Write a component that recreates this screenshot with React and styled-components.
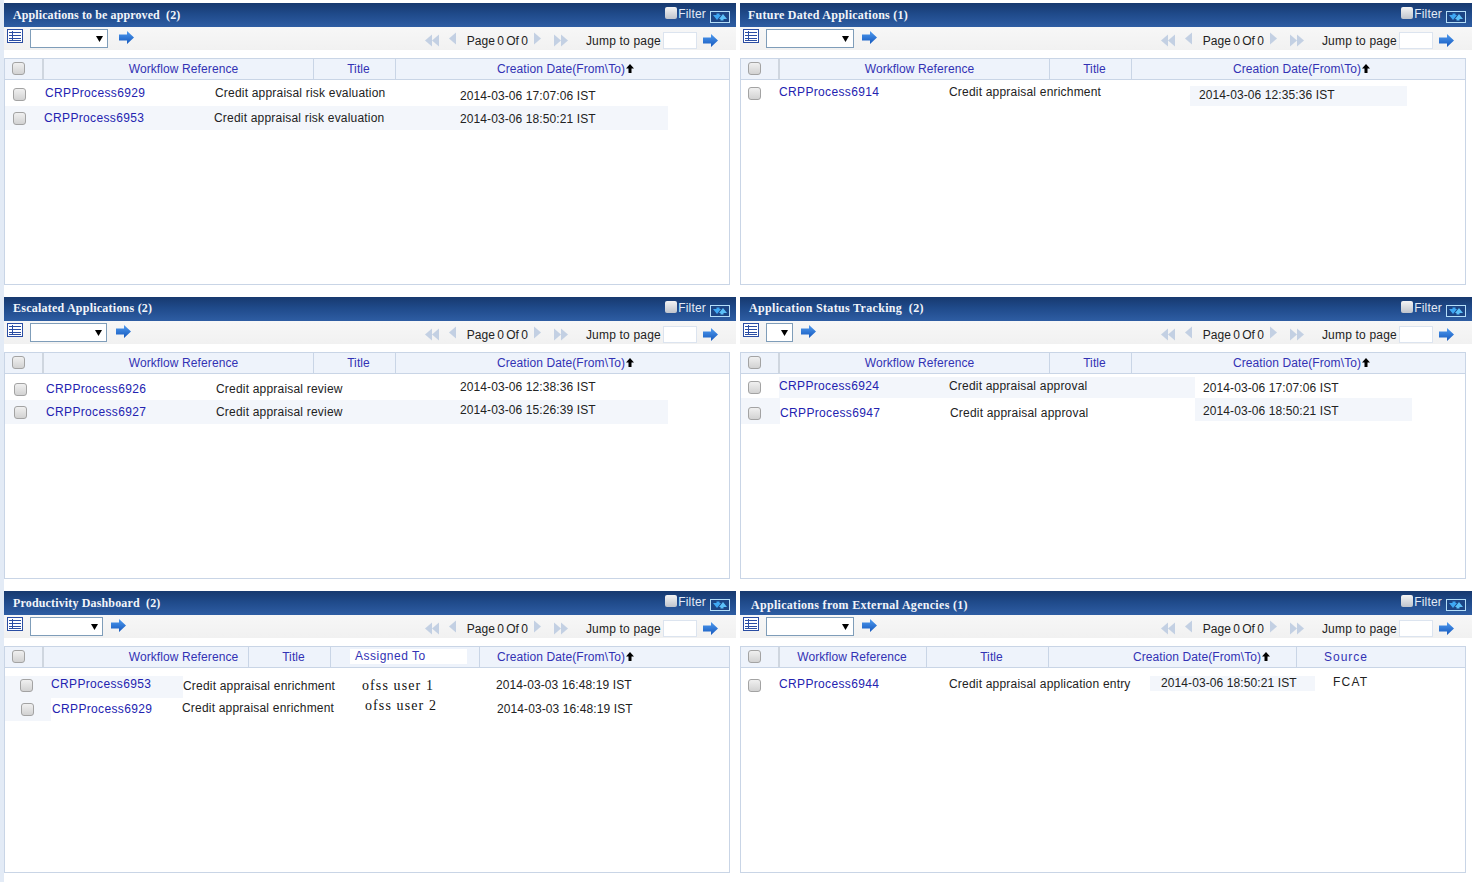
import React from 'react';
import styled, { createGlobalStyle } from 'styled-components';

const GlobalStyle = createGlobalStyle`
    html, body {
        margin: 0;
        padding: 0;
        background: #ffffff;
    }
    body {
        font-family: "Liberation Sans", Arial, sans-serif;
        font-size: 12px;
        color: #222222;
    }
`;

const Page = styled.div`
    display: grid;
    grid-template-columns: 732px 732px;
    grid-auto-rows: 282px;
    column-gap: 4px;
    row-gap: 12px;
    padding: 3px 0 9px 0;
    border-left: 4px solid #e3ebf6;
    width: 1469px;
    height: 870px;
`;

const Panel = styled.section`
    display: flex;
    flex-direction: column;
    min-width: 0;
`;

const PanelHeader = styled.header`
    display: flex;
    align-items: flex-start;
    height: 24px;
    box-sizing: border-box;
    padding-left: ${p => p.$titleX}px;
    background: linear-gradient(#17396f 0%, #1f4a8a 45%, #2e5da3 100%);
`;

const PanelTitle = styled.h2`
    margin: 0;
    padding-top: ${p => p.$drop + 5}px;
    font-family: "Liberation Serif", "Times New Roman", serif;
    font-size: 12px;
    line-height: 14px;
    font-weight: bold;
    letter-spacing: ${p => p.$spacing}px;
    color: #f2f5fa;
    white-space: pre;
`;

const FilterGroup = styled.label`
    display: flex;
    align-items: flex-start;
    margin-left: auto;
    padding: 4px 6px 0 0;
    color: #e3ebf6;
    line-height: 14px;
    letter-spacing: 0.2px;
`;

const FilterCheck = styled.input`
    appearance: none;
    width: 12px;
    height: 12px;
    margin: 0 1px 0 0;
    border-radius: 2px;
    background: linear-gradient(#f4f4f4, #bfc4cc);
`;

const RefreshGlyph = styled.svg`
    flex: none;
    width: 20px;
    height: 12px;
    margin: 4px 0 0 4px;
`;

const Toolbar = styled.div`
    display: flex;
    align-items: flex-start;
    height: 23px;
    padding-left: 3px;
    background: linear-gradient(#f7f7f7, #f1f1f1);
`;

const ListButton = styled.svg`
    flex: none;
    width: 16px;
    height: 14px;
    margin-top: 2px;
`;

const PageSelect = styled.div`
    flex: none;
    display: flex;
    align-items: center;
    justify-content: flex-end;
    box-sizing: border-box;
    width: ${p => p.$width}px;
    height: 19px;
    margin: 2px 0 0 7px;
    padding-right: 4px;
    border: 1px solid #7f9db9;
    background: #ffffff;
`;

const GoArrow = styled.svg`
    flex: none;
    width: 15px;
    height: 13px;
    margin-top: ${p => p.$top}px;
    margin-left: ${p => p.$left}px;
`;

const Pager = styled.div`
    display: flex;
    align-items: flex-start;
    margin-left: auto;
    padding-right: 18px;
`;

const PagerIcon = styled.svg`
    flex: none;
    height: 13px;
    margin-top: ${p => p.$top}px;
    margin-left: ${p => p.$left}px;
`;

const PageLabel = styled.span`
    margin: 7px 0 0 ${p => p.$left}px;
    line-height: 14px;
    letter-spacing: ${p => p.$spacing}px;
    word-spacing: ${p => p.$words}px;
    white-space: pre;
    color: #222222;
`;

const JumpInput = styled.input`
    flex: none;
    box-sizing: border-box;
    width: 34px;
    height: 17px;
    margin: 5px 0 0 2px;
    border: 1px solid #dce4ef;
    background: #ffffff;
`;

const Grid = styled.div`
    flex: 1;
    display: flex;
    flex-direction: column;
    width: 726px;
    margin-top: 8px;
    box-sizing: border-box;
    border: 1px solid #c9d5e6;
    min-height: 0;
`;

const GridHead = styled.div`
    display: grid;
    grid-template-columns: ${p => p.$cols};
    height: 21px;
    box-sizing: border-box;
    flex: none;
    border-bottom: 1px solid #c9d5e6;
    background: #eef3fb;
`;

const HeadCheck = styled.div`
    padding: 3px 0 0 7px;
    border-right: 2px solid #cfd6df;
`;

const HeadCell = styled.div`
    display: flex;
    align-items: center;
    justify-content: ${p => (p.$start ? 'flex-start' : 'center')};
    box-sizing: border-box;
    padding: 0 ${p => p.$right || 0}px 1px ${p => p.$left || 0}px;
    color: #3232b4;
    letter-spacing: ${p => p.$spacing ?? 0.1}px;
    white-space: nowrap;
    border-left: ${p => (p.$first ? 'none' : '1px solid #c9d5e6')};
`;

const HeadPatch = styled.span`
    display: block;
    background: #ffffff;
    padding: 0 41px 1px 5px;
`;

const SortArrow = styled.svg`
    flex: none;
    width: 8px;
    height: 9px;
    margin-left: 1px;
`;

const RowCheck = styled.input`
    appearance: none;
    display: block;
    box-sizing: border-box;
    width: 13px;
    height: 13px;
    margin: 0;
    border: 1px solid #a3a3a3;
    border-radius: 3px;
    background: linear-gradient(#f0f0f0, #d2d2d2);
`;

const Body = styled.div`
    flex: 1;
    display: flex;
    flex-direction: column;
    padding-top: ${p => p.$gap}px;
`;

const Row = styled.div`
    display: grid;
    grid-template-columns: ${p => p.$cols};
    flex: none;
    width: ${p => p.$width}px;
    height: ${p => p.$height}px;
    background: ${p => (p.$wash ? '#f3f6fb' : 'transparent')};
`;

const Cell = styled.div`
    box-sizing: border-box;
    min-width: 0;
    margin: ${p => p.$insetTop || 0}px 0 ${p => p.$insetBottom || 0}px;
    padding: ${p => p.$top}px 0 0 ${p => p.$left || 0}px;
    line-height: 14px;
    white-space: pre;
    letter-spacing: ${p => p.$spacing}px;
    background: ${p => (p.$wash ? '#f3f6fb' : 'transparent')};
`;

const RefLink = styled.a`
    color: #2323b0;
    text-decoration: none;
    letter-spacing: 0.35px;
`;

const UserName = styled.span`
    font-family: "Liberation Serif", "Times New Roman", serif;
    font-size: 14px;
    letter-spacing: 1.1px;
    color: #111111;
`;

const SourceText = styled.span`
    letter-spacing: 1.2px;
    color: #222222;
`;

const ListIcon = () => (
    <ListButton viewBox="0 0 16 14">
        <rect x="0.5" y="0.5" width="15" height="13" fill="#ffffff" stroke="#2a4da3" />
        <path d="M2 3.5h12M2 6.5h12M2 9.5h12M2 11.5h12M5.5 2v10" stroke="#2a4da3" fill="none" />
    </ListButton>
);

const ArrowIcon = ({ top, left }) => (
    <GoArrow viewBox="0 0 15 13" $top={top} $left={left}>
        <defs>
            <linearGradient id="go" x1="0" y1="0" x2="0" y2="1">
                <stop offset="0" stopColor="#4f9bf0" />
                <stop offset="1" stopColor="#1558bd" />
            </linearGradient>
        </defs>
        <path d="M0 3.5h8V0l7 6.5-7 6.5V9.5H0z" fill="url(#go)" />
    </GoArrow>
);

const Triangles = ({ dir, count, left, top }) => {
    const width = count === 2 ? 14 : 7;
    const shapes = [];
    for (let i = 0; i < count; i++) {
        const x = i * 7;
        shapes.push(
            <path
                key={i}
                d={dir === 'left' ? `M${x + 7} 0.5v12L${x} 6.5z` : `M${x} 0.5v12L${x + 7} 6.5z`}
                fill="#c3d0e3"
            />
        );
    }
    return (
        <PagerIcon viewBox={`0 0 ${width} 13`} width={width} $left={left} $top={top}>
            {shapes}
        </PagerIcon>
    );
};

const UpArrow = () => (
    <SortArrow viewBox="0 0 8 9">
        <path d="M4 0l4 4.5H5.5V9h-3V4.5H0z" fill="#000000" />
    </SortArrow>
);

const RefreshIcon = () => (
    <RefreshGlyph viewBox="0 0 20 12">
        <rect x="0.5" y="0.5" width="19" height="11" fill="#1c4585" stroke="#b5def8" />
        <path d="M3 4h3.5V2.5h3V4H11L7 9z" fill="#3fa8f4" />
        <path d="M17 8h-3.5v1.5h-3V8H9l4-5z" fill="#5cc0f8" />
    </RefreshGlyph>
);

const CreationLabel = () => (
    <>
        Creation Date(From\To)
        <UpArrow />
    </>
);

// x = left edge of a cell inside the grid, cy = the y its text is centred on
const c = (kind, text, x, cy, extra = {}) => ({ kind, text, x, cy, ...extra });

const standardHead = {
    cols: '39px 269px 82px 1fr',
    cells: [
        { text: 'Workflow Reference', first: true, left: 10 },
        { text: 'Title', left: 8 },
        { label: 'date', left: 6 },
    ],
};

const panels = [
    {
        title: 'Applications to be approved  (2)',
        titleX: 9,
        titleSpacing: 0.1,
        base: 3,
        select: 78,
        arrowLeft: 11,
        head: standardHead,
        rows: [
            {
                top: 81, height: 25, width: 663,
                cells: [
                    c('check', '', 8, 94),
                    c('link', 'CRPProcess6929', 40, 93),
                    c('text', 'Credit appraisal risk evaluation', 210, 93),
                    c('date', '2014-03-06 17:07:06 IST', 455, 96),
                ],
            },
            {
                top: 106, height: 24, width: 663, wash: true,
                cells: [
                    c('check', '', 8, 118),
                    c('link', 'CRPProcess6953', 39, 118),
                    c('text', 'Credit appraisal risk evaluation', 209, 118),
                    c('date', '2014-03-06 18:50:21 IST', 455, 119),
                ],
            },
        ],
    },
    {
        title: 'Future Dated Applications (1)',
        titleX: 8,
        titleSpacing: 0.25,
        base: 3,
        select: 88,
        arrowLeft: 8,
        head: standardHead,
        rows: [
            {
                top: 81, height: 25, width: 666,
                cells: [
                    c('check', '', 7, 93),
                    c('link', 'CRPProcess6914', 38, 92),
                    c('text', 'Credit appraisal enrichment', 208, 92),
                    c('date', '2014-03-06 12:35:36 IST', 449, 95, { left: 9, wash: true, insetTop: 5 }),
                ],
            },
        ],
    },
    {
        title: 'Escalated Applications (2)',
        titleX: 9,
        titleSpacing: 0.23,
        drop: -1,
        base: 297,
        select: 77,
        arrowLeft: 9,
        head: standardHead,
        rows: [
            {
                top: 376, height: 24, width: 663,
                cells: [
                    c('check', '', 9, 389),
                    c('link', 'CRPProcess6926', 41, 389),
                    c('text', 'Credit appraisal review', 211, 389),
                    c('date', '2014-03-06 12:38:36 IST', 455, 387),
                ],
            },
            {
                top: 400, height: 24, width: 663, wash: true,
                cells: [
                    c('check', '', 9, 412),
                    c('link', 'CRPProcess6927', 41, 412),
                    c('text', 'Credit appraisal review', 211, 412),
                    c('date', '2014-03-06 15:26:39 IST', 455, 410),
                ],
            },
        ],
    },
    {
        title: 'Application Status Tracking  (2)',
        titleX: 9,
        titleSpacing: 0.33,
        drop: -1,
        base: 297,
        select: 27,
        arrowLeft: 8,
        head: standardHead,
        rows: [
            {
                top: 377, height: 21, width: 671,
                cells: [
                    c('check', '', 7, 387),
                    c('link', 'CRPProcess6924', 38, 386, { wash: true }),
                    c('text', 'Credit appraisal approval', 208, 386, { wash: true }),
                    c('date', '2014-03-06 17:07:06 IST', 454, 388, { left: 8 }),
                ],
            },
            {
                top: 398, height: 26, width: 671,
                cells: [
                    c('check', '', 4, 413, { left: 3, wash: true }),
                    c('link', 'CRPProcess6947', 39, 413),
                    c('text', 'Credit appraisal approval', 209, 413),
                    c('date', '2014-03-06 18:50:21 IST', 454, 411, { left: 8, wash: true, insetBottom: 3 }),
                ],
            },
        ],
    },
    {
        title: 'Productivity Dashboard  (2)',
        titleX: 9,
        titleSpacing: 0.15,
        base: 591,
        select: 73,
        arrowLeft: 8,
        head: {
            cols: '39px 204px 82px 149px 1fr',
            cells: [
                { text: 'Workflow Reference', first: true, left: 75 },
                { text: 'Title', left: 8 },
                { label: 'assigned', left: 19, start: true },
                { label: 'date', right: 78 },
            ],
        },
        rows: [
            {
                top: 676, height: 22, width: 640,
                cells: [
                    c('check', '', 8, 685, { left: 7, wash: true }),
                    c('link', 'CRPProcess6953', 46, 684, { wash: true }),
                    c('text', 'Credit appraisal enrichment', 178, 686),
                    c('user', 'ofss user 1', 357, 686),
                    c('date', '2014-03-03 16:48:19 IST', 491, 685),
                ],
            },
            {
                top: 698, height: 23, width: 640,
                cells: [
                    c('check', '', 8, 709, { left: 8, wash: true }),
                    c('link', 'CRPProcess6929', 46, 709, { left: 1 }),
                    c('text', 'Credit appraisal enrichment', 177, 708),
                    c('user', 'ofss user 2', 360, 706),
                    c('date', '2014-03-03 16:48:19 IST', 492, 709),
                ],
            },
        ],
    },
    {
        title: 'Applications from External Agencies (1)',
        titleX: 11,
        titleSpacing: 0.3,
        drop: 2,
        base: 591,
        select: 88,
        arrowLeft: 8,
        head: {
            cols: '39px 146px 122px 248px 1fr',
            cells: [
                { text: 'Workflow Reference', first: true, right: 2 },
                { text: 'Title', left: 8 },
                { label: 'date', left: 58 },
                { label: 'source', left: 27, start: true },
            ],
        },
        rows: [
            {
                top: 672, height: 24, width: 724,
                cells: [
                    c('check', '', 7, 685),
                    c('link', 'CRPProcess6944', 38, 684),
                    c('text', 'Credit appraisal application entry', 208, 684),
                    c('date', '2014-03-06 18:50:21 IST', 409, 683, { left: 11, wash: true, end: 574, insetTop: 4, insetBottom: 5 }),
                    c('source', 'FCAT', 574, 682, { left: 18 }),
                ],
            },
        ],
    },
];

const headLabel = cell => {
    if (cell.label === 'date') return <CreationLabel />;
    if (cell.label === 'assigned') return <HeadPatch>Assigned To</HeadPatch>;
    if (cell.label === 'source') return 'Source';
    return cell.text;
};

const headSpacing = cell => {
    if (cell.label === 'source') return 1;
    if (cell.label === 'assigned') return 0.5;
    return undefined;
};

const rowColumns = row =>
    row.cells
        .map((cell, i) => {
            const next = row.cells[i + 1];
            const first = i === 0 ? 0 : cell.x;
            const end = next ? next.x : cell.end || row.width;
            return `${end - first}px`;
        })
        .join(' ');

const cellSpacing = { date: 0.1, text: 0.2 };

const RowCells = ({ row }) =>
    row.cells.map((cell, i) => {
        const boxHeight = cell.kind === 'check' ? 13 : 14;
        const inset = cell.insetTop || 0;
        const top = Math.max(0, Math.round(cell.cy - boxHeight / 2) - row.top - inset);
        const left = i === 0 ? cell.x + (cell.left || 0) : cell.left || 0;
        return (
            <Cell
                key={i}
                $top={top}
                $left={left}
                $wash={cell.wash}
                $insetTop={cell.insetTop}
                $insetBottom={cell.insetBottom}
                $spacing={cellSpacing[cell.kind] || 0}
            >
                {cell.kind === 'check' && <RowCheck type="checkbox" />}
                {cell.kind === 'link' && <RefLink href="#">{cell.text}</RefLink>}
                {(cell.kind === 'text' || cell.kind === 'date') && cell.text}
                {cell.kind === 'user' && <UserName>{cell.text}</UserName>}
                {cell.kind === 'source' && <SourceText>{cell.text}</SourceText>}
            </Cell>
        );
    });

const WorkPanel = ({ panel }) => (
    <Panel>
        <PanelHeader $titleX={panel.titleX}>
            <PanelTitle $drop={panel.drop || 0} $spacing={panel.titleSpacing}>{panel.title}</PanelTitle>
            <FilterGroup>
                <FilterCheck type="checkbox" />
                Filter
                <RefreshIcon />
            </FilterGroup>
        </PanelHeader>
        <Toolbar>
            <ListIcon />
            <PageSelect $width={panel.select}>
                <svg width="7" height="6" viewBox="0 0 7 6">
                    <path d="M0 0h7L3.5 6z" fill="#000000" />
                </svg>
            </PageSelect>
            <ArrowIcon top={4} left={panel.arrowLeft} />
            <Pager>
                <Triangles dir="left" count={2} left={0} top={7} />
                <Triangles dir="left" count={1} left={10} top={5} />
                <PageLabel $left={11} $spacing={0} $words={-1}>Page 0 Of 0</PageLabel>
                <Triangles dir="right" count={1} left={6} top={5} />
                <Triangles dir="right" count={2} left={13} top={7} />
                <PageLabel $left={18} $spacing={0.2} $words={0}>Jump to page</PageLabel>
                <JumpInput />
                <ArrowIcon top={7} left={6} />
            </Pager>
        </Toolbar>
        <Grid>
            <GridHead $cols={panel.head.cols}>
                <HeadCheck>
                    <RowCheck type="checkbox" />
                </HeadCheck>
                {panel.head.cells.map((cell, i) => (
                    <HeadCell
                        key={i}
                        $first={cell.first}
                        $left={cell.left}
                        $right={cell.right}
                        $start={cell.start}
                        $spacing={headSpacing(cell)}
                    >
                        {headLabel(cell)}
                    </HeadCell>
                ))}
            </GridHead>
            <Body $gap={panel.rows[0].top - (panel.base + 77)}>
                {panel.rows.map((row, i) => (
                    <Row key={i} $cols={rowColumns(row)} $width={row.width} $height={row.height} $wash={row.wash}>
                        <RowCells row={row} />
                    </Row>
                ))}
            </Body>
        </Grid>
    </Panel>
);

const App = () => (
    <>
        <GlobalStyle />
        <Page>
            {panels.map(panel => (
                <WorkPanel key={panel.title} panel={panel} />
            ))}
        </Page>
    </>
);

export default App;
